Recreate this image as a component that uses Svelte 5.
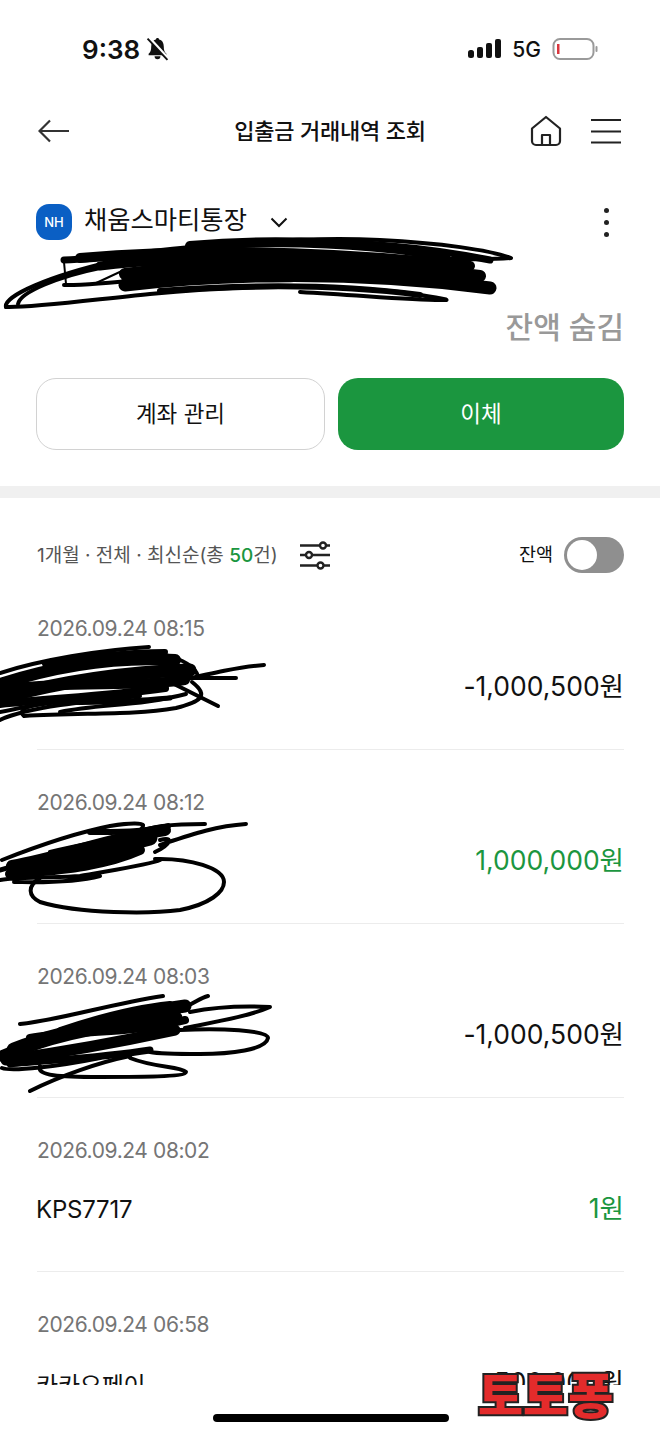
<script>
  const rows = [
    { date: '2026.09.24 08:15', name: '', amount: '-1,000,500원', income: false },
    { date: '2026.09.24 08:12', name: '', amount: '1,000,000원', income: true },
    { date: '2026.09.24 08:03', name: '', amount: '-1,000,500원', income: false },
    { date: '2026.09.24 08:02', name: 'KPS7717', amount: '1원', income: true },
    { date: '2026.09.24 06:58', name: '카카오페이', amount: '500,000원', income: false }
  ];

  // hand scribbles covering private text
  const scribbles = [
    // account number
    { w: 4, d: 'M6 307C3 296 50 276 110 262C190 246 290 236 380 240C440 243 490 250 511 258C470 262 380 255 250 252C170 250 110 256 64 260' },
    { w: 4, d: 'M6 307C30 308 90 300 150 294C230 286 330 284 400 292C430 296 450 300 446 300C420 301 370 296 300 292' },
    { w: 4, d: 'M18 304C20 292 60 276 100 268' },
    { w: 4, d: 'M64 285C110 286 180 272 260 270C340 268 430 276 490 290' },
    { w: 2, d: 'M64 262L66 284M94 284L124 270' },
    { w: 7, d: 'M64 260C120 258 220 242 300 242C380 242 440 250 490 260' },
    { w: 10, d: 'M80 258C180 250 300 248 470 266' },
    { w: 12, d: 'M125 274C220 262 340 258 480 276' },
    { w: 13, d: 'M125 285C220 274 350 270 490 288' },
    { w: 10, d: 'M190 246C280 238 380 244 445 256' },
    { w: 10, d: 'M170 264C280 254 380 256 455 270' },
    { w: 9, d: 'M100 266C180 256 300 258 400 262' },
    { w: 6, d: 'M160 291C240 285 330 283 420 295' },
    // first row
    { w: 4, d: 'M0 673C40 660 100 650 149 647' },
    { w: 4, d: 'M264 665C235 667 200 676 165 684M236 678L170 678' },
    { w: 4, d: 'M218 706L170 682' },
    { w: 4, d: 'M140 654C165 650 198 664 198 678M160 664L170 660C188 660 170 668 150 676' },
    { w: 4, d: 'M192 682C210 696 200 702 176 708C130 716 80 712 24 716C18 712 24 706 40 704' },
    { w: 4, d: 'M0 720C30 706 100 700 140 696' },
    { w: 12, d: 'M0 684C50 668 110 656 175 660' },
    { w: 13, d: 'M0 698C60 682 120 672 190 670' },
    { w: 10, d: 'M0 690C70 680 130 688 185 680' },
    { w: 8, d: 'M0 704C60 698 110 696 165 688' },
    { w: 6, d: 'M45 664C90 656 130 652 165 652' },
    { w: 5, d: 'M20 699C70 705 120 702 170 698' },
    { w: 4, d: 'M60 712C100 704 140 706 186 694' },
    { w: 4, d: 'M0 712C30 706 50 702 80 700' },
    // second row
    { w: 4, d: 'M2 860C40 845 80 832 110 826C130 823 142 823 143 825C145 835 100 840 50 852' },
    { w: 4, d: 'M246 824C215 826 190 835 160 845M205 824C175 824 150 826 140 832M160 840C175 836 170 845 155 852' },
    { w: 4, d: 'M0 880C20 876 60 878 80 876C100 872 150 865 160 860M14 882C30 882 70 884 100 876' },
    { w: 4, d: 'M40 878C27 886 28 896 40 902C80 914 150 914 180 910C210 904 224 892 224 882C224 868 190 858 155 859' },
    { w: 12, d: 'M12 866C60 858 110 838 165 830' },
    { w: 15, d: 'M35 866C80 858 110 848 150 838' },
    { w: 10, d: 'M10 874C50 870 100 868 140 850' },
    { w: 6, d: 'M90 832C120 832 150 832 168 826' },
    { w: 5, d: 'M0 870C30 862 60 852 100 842' },
    // third row
    { w: 4, d: 'M20 1024C60 1020 110 1004 163 996M30 1091C60 1076 100 1062 130 1056M185 1007C195 1003 200 998 208 996' },
    { w: 4, d: 'M190 1012C220 1006 250 1006 270 1007C250 1016 215 1022 185 1028' },
    { w: 4, d: 'M180 1030C220 1028 268 1030 268 1038C266 1050 230 1054 200 1054C175 1054 160 1054 150 1052' },
    { w: 4, d: 'M130 1058C155 1068 180 1066 186 1072C186 1077 140 1077 100 1077C60 1077 36 1076 40 1066' },
    { w: 4, d: 'M2 1068C12 1072 60 1066 100 1058' },
    { w: 13, d: 'M4 1056C50 1036 110 1016 185 1006' },
    { w: 15, d: 'M14 1050C60 1032 110 1022 175 1018' },
    { w: 11, d: 'M6 1060C50 1054 110 1044 175 1030' },
    { w: 8, d: 'M30 1038C70 1030 120 1036 185 1020' },
    { w: 7, d: 'M10 1064C50 1060 100 1058 150 1050' },
    { w: 6, d: 'M60 1030C90 1020 130 1008 170 1004' }
  ];
</script>

<div class="page">
  <div class="status">
    <div class="status-left">
      <span class="time">9:38</span>
      <svg width="23" height="24" viewBox="0 0 22 22">
        <path d="M11 .5c-.9 0-1.500.6-1.600 1.400C6.600 2.600 5 5 5 8.500c0 3.700-.7 5.500-2.500 7v1.500h17v-1.500C17.700 14 17 12.200 17 8.500 17 5 15.400 2.600 12.600 1.900 12.500 1.100 11.900.5 11 .5zM8.200 18a2.800 2.800 0 0 0 5.600 0z" fill="#111" />
        <path d="M2.600 0L21 20" stroke="#fff" stroke-width="3" />
        <path d="M1.500 1L20.500 21.500" stroke="#111" stroke-width="1.800" />
      </svg>
    </div>
    <div class="status-right">
      <svg width="34" height="20" viewBox="0 0 34 20" fill="#111">
        <rect x="0" y="11" width="6" height="8" rx="2.500" />
        <rect x="9" y="8" width="6" height="11" rx="2" />
        <rect x="18" y="4" width="6" height="15" rx="2" />
        <rect x="27" y="0" width="6" height="19" rx="2" />
      </svg>
      <span class="net">5G</span>
      <svg width="46" height="24" viewBox="0 0 46 24">
        <rect x="1.500" y="2" width="40" height="20" rx="6.500" fill="#fff" stroke="#9a9a9a" stroke-width="2" />
        <rect x="5" y="7" width="2.500" height="10" fill="#d9363e" />
        <rect x="43.500" y="9" width="2" height="6" rx="1" fill="#9a9a9a" />
      </svg>
    </div>
  </div>

  <div class="nav">
    <div class="nav-left">
      <svg width="32" height="24" viewBox="0 0 32 24" fill="none" stroke="#333" stroke-width="2.200">
        <path d="M31 12H2M12 1.500L1.500 12 12 22.500" />
      </svg>
    </div>
    <h1>입출금 거래내역 조회</h1>
    <div class="nav-icons">
      <svg width="32" height="32" viewBox="0 0 32 32" fill="none" stroke="#222" stroke-width="2.200" stroke-linejoin="round">
        <path d="M2 13.500L16 2l14 11.500V26a4 4 0 0 1-4 4H6a4 4 0 0 1-4-4z" />
        <path d="M12 30V20h8v10" />
      </svg>
      <svg width="32" height="26" viewBox="0 0 32 26" stroke="#222" stroke-width="2.200">
        <path d="M1 2h30M1 13.500h30M1 24.500h30" />
      </svg>
    </div>
  </div>

  <div class="account">
    <div class="account-head">
      <div class="logo">NH</div>
      <span class="account-name">채움스마티통장</span>
      <svg class="chevron" width="18" height="11" viewBox="0 0 18 11" fill="none" stroke="#111" stroke-width="2">
        <path d="M1.500 1.500L9 9l7.500-7.500" />
      </svg>
      <div class="kebab"><i></i><i></i><i></i></div>
    </div>
    <div class="hidden-balance">잔액 숨김</div>
    <div class="actions">
      <button class="manage">계좌 관리</button>
      <button class="transfer">이체</button>
    </div>
  </div>

  <div class="separator"></div>

  <div class="list">
    <div class="filter">
      <span class="filter-text">1개월 · 전체 · 최신순(총 <b>50</b>건)</span>
      <svg width="32" height="30" viewBox="0 0 32 30" fill="none" stroke="#222" stroke-width="2.400">
        <path d="M1 5.500h20M27 5.500h4M1 15h6M13 15h18M1 25.500h17M25 25.500h6" />
        <circle cx="24" cy="5.500" r="3" />
        <circle cx="10" cy="15" r="3" />
        <circle cx="21.500" cy="25.500" r="3" />
      </svg>
      <span class="balance-label">잔액</span>
      <div class="toggle"><div class="knob"></div></div>
    </div>

    {#each rows as row}
      <div class="row">
        <div class="date">{row.date}</div>
        <div class="row-main">
          <span class="name">{row.name}</span>
          <span class="amount" class:income={row.income}>{row.amount}</span>
        </div>
      </div>
    {/each}
  </div>

  <div class="home-area"><div class="home-bar"></div></div>

  <svg class="scribbles" width="660" height="1434" viewBox="0 0 660 1434" fill="none" stroke="#000" stroke-linecap="round" stroke-linejoin="round">
    {#each scribbles as s}
      <path d={s.d} stroke-width={s.w} />
    {/each}
  </svg>

  <div class="watermark">토토퐁</div>
</div>

<style>
  :global(body) {
    margin: 0;
    background: #fff;
  }

  .page {
    position: relative;
    width: 660px;
    height: 1434px;
    overflow: hidden;
    background: #fff;
    color: #111;
    font-family: Inter, "Noto Sans CJK KR", sans-serif;
    display: flex;
    flex-direction: column;
  }

  .status {
    height: 98px;
    flex: none;
    display: flex;
    align-items: center;
    justify-content: space-between;
    padding: 0 62px 0 82px;
    box-sizing: border-box;
  }

  .status-left,
  .status-right {
    display: flex;
    align-items: center;
  }

  .status-left {
    gap: 6px;
  }

  .status-right {
    gap: 11px;
  }

  .time {
    font-size: 26px;
    font-weight: 600;
  }

  .net {
    font-size: 21px;
    font-weight: 500;
    margin-left: -1px;
  }

  .nav {
    height: 66px;
    flex: none;
    display: grid;
    grid-template-columns: 1fr auto 1fr;
    align-items: center;
    padding: 0 38px;
  }

  .nav-left {
    display: flex;
    align-items: center;
  }

  .nav h1 {
    margin: 0;
    font-size: 22px;
    font-weight: 500;
    letter-spacing: -0.2px;
    padding-bottom: 5px;
  }

  .nav-icons {
    display: flex;
    align-items: center;
    justify-content: flex-end;
    gap: 28px;
  }

  .nav-icons svg {
    display: block;
  }

  .account {
    flex: none;
    padding: 40px 36px 36px;
  }

  .account-head {
    display: flex;
    align-items: center;
    height: 36px;
  }

  .logo {
    width: 36px;
    height: 36px;
    border-radius: 13px;
    background: #0a5fc4;
    color: #fff;
    font-size: 13px;
    font-weight: 500;
    display: flex;
    align-items: center;
    justify-content: center;
  }

  .account-name {
    margin-left: 12px;
    font-size: 25.300px;
    line-height: 36px;
    padding-bottom: 4px;
  }

  .chevron {
    margin-left: 23px;
  }

  .kebab {
    margin-left: auto;
    margin-right: 15px;
    display: flex;
    flex-direction: column;
    gap: 7px;
  }

  .kebab i {
    display: block;
    width: 5px;
    height: 5px;
    border-radius: 50%;
    background: #222;
  }

  .hidden-balance {
    margin-top: 65px;
    text-align: right;
    font-size: 30px;
    font-weight: 500;
    color: #999;
    line-height: 44px;
  }

  .actions {
    margin-top: 29px;
    display: flex;
    gap: 13px;
  }

  .actions button {
    height: 72px;
    font-family: inherit;
    font-size: 22.500px;
    border-radius: 20px;
    padding: 0 0 4px;
  }

  .manage {
    width: 289px;
    background: #fff;
    color: #111;
    border: 1.500px solid #d2d2d2;
  }

  .transfer {
    flex: 1;
    background: #1b963f;
    color: #fff;
    border: none;
  }

  .separator {
    height: 12px;
    flex: none;
    background: #f0f0f0;
  }

  .list {
    height: 887px;
    flex: none;
    overflow: hidden;
  }

  .filter {
    height: 78px;
    box-sizing: border-box;
    padding: 36px 36px 0 37px;
    display: flex;
    align-items: center;
  }

  .filter-text {
    font-size: 19px;
    color: #555;
    margin-right: 21px;
    padding-bottom: 3px;
  }

  .filter-text b {
    color: #1b963f;
    font-weight: 500;
  }

  .balance-label {
    margin-left: auto;
    font-size: 18.500px;
    margin-right: 11px;
    padding-bottom: 4px;
  }

  .toggle {
    width: 60px;
    height: 36px;
    border-radius: 18px;
    background: #8f8f8f;
    padding: 3px;
    box-sizing: border-box;
  }

  .knob {
    width: 30px;
    height: 30px;
    border-radius: 50%;
    background: #fff;
  }

  .row {
    margin: 0 36px 0 37px;
    box-sizing: border-box;
    height: 174px;
    padding-top: 41px;
    border-bottom: 1px solid #ececec;
  }

  .date {
    font-size: 21px;
    line-height: 24px;
    color: #757575;
    letter-spacing: -0.4px;
  }

  .row-main {
    margin-top: 32px;
    display: flex;
    justify-content: space-between;
    align-items: center;
    height: 28px;
  }

  .name {
    font-size: 24px;
    letter-spacing: -0.2px;
    margin-left: -1px;
  }

  .amount {
    font-size: 26.500px;
    padding-bottom: 6px;
  }

  .amount.income {
    color: #1b963f;
  }

  .home-area {
    flex: 1;
    display: flex;
    justify-content: center;
    align-items: flex-end;
    padding-bottom: 12px;
  }

  .home-bar {
    width: 236px;
    height: 8px;
    margin-left: 1px;
    border-radius: 4px;
    background: #000;
  }

  .scribbles {
    position: absolute;
    left: 0;
    top: 0;
    pointer-events: none;
  }

  .watermark {
    position: absolute;
    left: 478px;
    top: 1368px;
    font-size: 49px;
    line-height: 58px;
    font-weight: 900;
    color: #e32b2b;
    -webkit-text-stroke: 4px #222;
    paint-order: stroke fill;
    white-space: nowrap;
  }
</style>
